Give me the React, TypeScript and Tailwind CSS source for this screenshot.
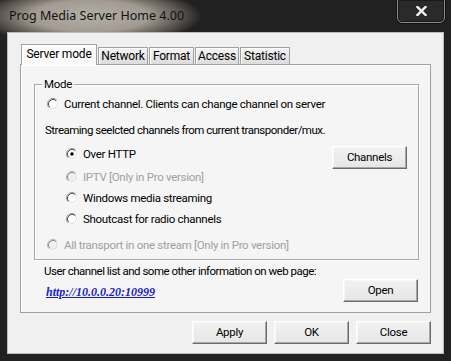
import type { ReactNode } from 'react'

function Radio({ checked = false, disabled = false }: { checked?: boolean; disabled?: boolean }) {
  return (
    <svg width="12" height="12" viewBox="0 0 12 12" className="shrink-0">
      <circle cx="6" cy="6" r="4.5" fill={disabled ? '#f0f0f0' : '#ffffff'} />
      <path d="M2.11 9.89 A5.5 5.5 0 0 1 9.89 2.11" fill="none" stroke={disabled ? '#b4b4b4' : '#9a9a9a'} />
      <path d="M9.89 2.11 A5.5 5.5 0 0 1 2.11 9.89" fill="none" stroke="#ffffff" />
      <path d="M2.82 9.18 A4.5 4.5 0 0 1 9.18 2.82" fill="none" stroke={disabled ? '#8a8a8a' : '#505050'} />
      <path d="M9.18 2.82 A4.5 4.5 0 0 1 2.82 9.18" fill="none" stroke="#dcdcdc" />
      {checked && <circle cx="6" cy="6" r="1.8" fill="#000000" />}
    </svg>
  )
}

function Option({ children, checked, disabled }: { children: ReactNode; checked?: boolean; disabled?: boolean }) {
  return (
    <div className="flex h-[16px] items-center gap-[5px]">
      <Radio checked={checked} disabled={disabled} />
      <span className={disabled ? 'leading-[16px] text-[#a0a0a0]' : 'leading-[16px]'}>{children}</span>
    </div>
  )
}

function Button({ children, className = '' }: { children: ReactNode; className?: string }) {
  return (
    <div
      className={`flex h-[23px] w-[75px] items-center justify-center border border-t-white border-l-white border-r-[#6b6b6b] border-b-[#6b6b6b] bg-gradient-to-b from-[#f2f2f2] to-[#e6e6e6] leading-none shadow-[inset_-1px_-1px_0_#a8a8a8,inset_1px_1px_0_#f6f6f6] ${className}`}
    >
      {children}
    </div>
  )
}

const tabs = [
  { label: 'Network', w: 'w-[50px]' },
  { label: 'Format', w: 'w-[45px]' },
  { label: 'Access', w: 'w-[44px]' },
  { label: 'Statistic', w: 'w-[50px]' },
]

export default function App() {
  return (
    <div className="flex h-[361px] w-[451px] flex-col overflow-hidden bg-[#1d1d1d] bg-[radial-gradient(112px_30px_at_90px_16px,#b5afa7_0%,#a39b93_52%,#57524d_82%,#222121_100%)] font-['Roboto',sans-serif] text-[11.5px] tracking-[-0.3px] text-black">
      {/* title bar */}
      <div className="flex h-[32px] shrink-0 items-start justify-between">
        <div className="pl-[9px] pt-[7px] font-['Noto_Sans',sans-serif] text-[12.5px] leading-[18px] tracking-normal text-[#111]">
          Prog Media Server Home 4.00
        </div>
        <div className="mr-[6px] mt-[-1px] flex h-[24px] w-[48px] items-center justify-center rounded-b-[5px] border border-[#8a8a8a] bg-[#2a2a2a] shadow-[0_0_0_1px_#111,inset_0_0_0_1px_#1a1a1a]">
          <svg width="11" height="10" viewBox="0 0 11 10">
            <path d="M1.5 1 L9.5 9 M9.5 1 L1.5 9" stroke="#f4f4f4" strokeWidth="2.4" strokeLinecap="square" />
          </svg>
        </div>
      </div>

      {/* client area */}
      <div className="mx-[7px] flex h-[322px] flex-col border border-[#b8bcc0] bg-[#f0f0f0] px-[12px] pt-[11px]">
        {/* tabs */}
        <div className="relative z-10 flex h-[20px] items-end pl-[1px] text-[12px] tracking-[-0.2px]">
          <div className="mb-[-1px] flex h-[21px] w-[76px] items-start justify-center border border-b-0 border-[#a0a0a0] bg-[#fafafa] pt-[1px] leading-[16px] text-black shadow-[inset_1px_1px_0_#ffffff]">
            Server mode
          </div>
          {tabs.map((t) => (
            <div
              key={t.label}
              className={`ml-[1px] flex h-[17px] items-center justify-center border border-b-0 border-[#a0a0a0] bg-gradient-to-b from-[#f4f4f4] to-[#dcdcdc] leading-[16px] shadow-[inset_1px_1px_0_#ffffff] ${t.w}`}
            >
              {t.label}
            </div>
          ))}
        </div>

        {/* panel */}
        <div className="flex h-[249px] w-[411px] flex-col border border-[#a0a0a0] bg-[#f5f5f5] shadow-[inset_1px_1px_0_#ffffff]">
          <fieldset className="ml-[13px] mt-[11px] h-[184px] w-[385px] border border-[#a8a8a8] shadow-[1px_1px_0_#ffffff,inset_1px_1px_0_#ffffff]">
            <legend className="ml-[7px] px-[2px] leading-[16px]">Mode</legend>
            <div className="mt-[4px] pl-[12px]">
              <Option>Current channel. Clients can change channel on server</Option>
            </div>
            <div className="mt-[10px] pl-[10px] leading-[16px] tracking-[-0.5px]">
              Streaming seelcted channels from current transponder/mux.
            </div>
            <div className="mt-[8px] flex items-start pl-[31px]">
              <Option checked>Over HTTP</Option>
              <Button className="ml-auto mr-[11px] h-[22px] w-[74px]">Channels</Button>
            </div>
            <div className="pl-[31px]">
              <Option disabled>IPTV [Only in Pro version]</Option>
            </div>
            <div className="mt-[5px] pl-[31px]">
              <Option>Windows media streaming</Option>
            </div>
            <div className="mt-[5px] pl-[31px]">
              <Option>Shoutcast for radio channels</Option>
            </div>
            <div className="mt-[10px] pl-[12px]">
              <Option disabled>All transport in one stream [Only in Pro version]</Option>
            </div>
          </fieldset>
          <div className="mt-[3px] pl-[23px] leading-[16px] tracking-[-0.5px]">
            User channel list and some other information on web page:
          </div>
          <div className="flex items-start">
            <span className="ml-[25px] mt-[5px] font-['Liberation_Serif',serif] text-[12px] font-bold italic leading-[16px] tracking-normal text-[#1a1ad0] underline">
              http://10.0.0.20:10999
            </span>
            <Button className="ml-auto mr-[12px]">Open</Button>
          </div>
        </div>

        {/* dialog buttons */}
        <div className="mt-[8px] flex justify-end gap-[7px]">
          <Button>Apply</Button>
          <Button>OK</Button>
          <Button>Close</Button>
        </div>
      </div>
    </div>
  )
}
